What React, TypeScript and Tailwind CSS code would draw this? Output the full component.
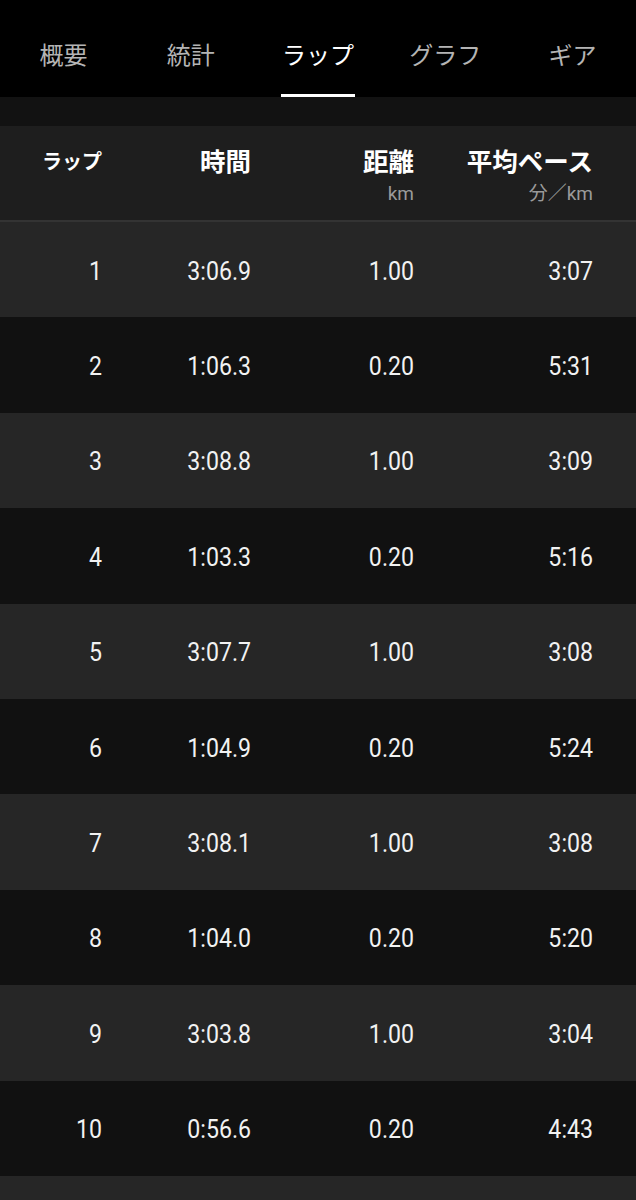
import React from "react";

const tabs = ["概要", "統計", "ラップ", "グラフ", "ギア"];
const rows = [
  ["1", "3:06.9", "1.00", "3:07"],
  ["2", "1:06.3", "0.20", "5:31"],
  ["3", "3:08.8", "1.00", "3:09"],
  ["4", "1:03.3", "0.20", "5:16"],
  ["5", "3:07.7", "1.00", "3:08"],
  ["6", "1:04.9", "0.20", "5:24"],
  ["7", "3:08.1", "1.00", "3:08"],
  ["8", "1:04.0", "0.20", "5:20"],
  ["9", "3:03.8", "1.00", "3:04"],
  ["10", "0:56.6", "0.20", "4:43"],
];

export default function App() {
  return (
    <div
      className="w-[636px] h-[1200px] overflow-hidden bg-[#111111] text-white"
      style={{ fontFamily: 'Roboto, "Noto Sans CJK JP", sans-serif' }}
    >
      <nav className="grid grid-cols-5 h-[97px] bg-black">
        {tabs.map((t, i) => (
          <div key={t} className="relative flex items-center justify-center">
            <span
              className={
                "text-[24px] leading-none translate-y-[7px] " +
                (i === 2 ? "text-white" : "text-[#b4b4b4]")
              }
            >
              {t}
            </span>
            {i === 2 && (
              <div className="absolute bottom-0 left-1/2 -translate-x-1/2 w-[74px] h-[3px] bg-white" />
            )}
          </div>
        ))}
      </nav>
      <div className="h-[29px] bg-[#121212]" />
      <div className="h-[96px] bg-[#1e1e1e] border-b-2 border-[#333333] grid grid-cols-[102px_149px_163px_179px] text-right">
        <div className="pt-[25px]">
          <div className="text-[20px] font-bold leading-[22px]">ラップ</div>
        </div>
        <div className="pt-[22px]">
          <div className="text-[25.5px] font-bold leading-[28px]">時間</div>
        </div>
        <div className="pt-[22px]">
          <div className="text-[25.5px] font-bold leading-[28px]">距離</div>
          <div className="text-[19px] text-[#9a9a9a] leading-[20px] mt-[8px]">km</div>
        </div>
        <div className="pt-[22px]">
          <div className="text-[25.5px] font-bold leading-[28px]">平均ペース</div>
          <div className="text-[19px] text-[#9a9a9a] leading-[20px] mt-[8px]">分／km</div>
        </div>
      </div>
      {rows.map((r, i) => (
        <div
          key={r[0]}
          className={
            "h-[95.4px] grid grid-cols-[102px_149px_163px_179px] items-center text-right text-[26px] text-[#f2f2f2] " +
            (i % 2 === 0 ? "bg-[#262626]" : "bg-[#111111]")
          }
        >
          {r.map((c, j) => (
            <div key={j} className="leading-none scale-x-[0.89] origin-right translate-y-[1px]">
              {c}
            </div>
          ))}
        </div>
      ))}
      <div className="h-[95.4px] bg-[#262626]" />
    </div>
  );
}
